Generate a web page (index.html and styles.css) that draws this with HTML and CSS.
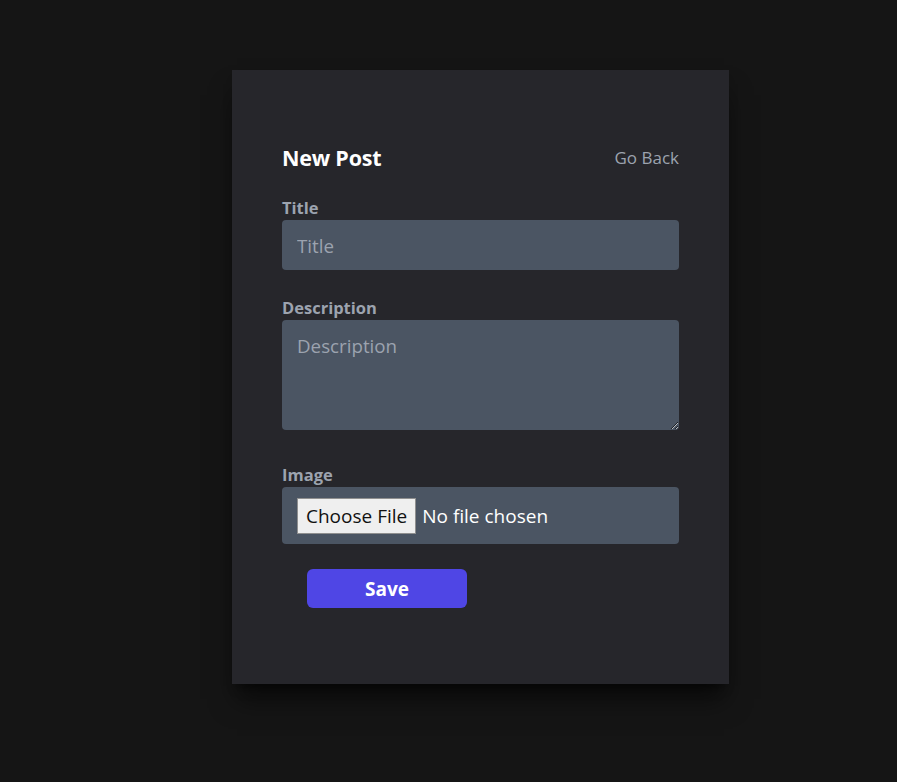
FILE: index.html
```html
<!DOCTYPE html>
<html>
<head>
<meta charset="utf-8">
<link rel="stylesheet" href="styles.css">
</head>
<body>
<div class="page">
  <form class="card">
    <div class="head">
      <h1 class="title">New Post</h1>
      <a class="back" href="#">Go Back</a>
    </div>
    <div class="field">
      <label class="label" for="t">Title</label>
      <input class="input" id="t" type="text" placeholder="Title">
    </div>
    <div class="field">
      <label class="label" for="d">Description</label>
      <textarea class="area" id="d" placeholder="Description"></textarea>
    </div>
    <div class="field">
      <label class="label" for="i">Image</label>
      <div class="filebox"><input class="file" id="i" type="file"></div>
    </div>
    <div class="actions">
      <button class="save" type="button">Save</button>
    </div>
  </form>
</div>
</body>
</html>
```

FILE: styles.css
```css
* { box-sizing: border-box; }
html, body { margin: 0; padding: 0; }
body {
  background: #151515;
  font-family: "Open Sans", "Noto Sans", sans-serif;
  height: 782px;
  overflow: hidden;
}
.page {
  padding: 70px 0 0 232px;
}
.card {
  width: 497px;
  height: 614px;
  background: #26262b;
  padding: 74px 50px 0 50px;
  box-shadow: 0 20px 25px -5px rgba(0,0,0,0.55), 0 8px 10px -6px rgba(0,0,0,0.55);
}
.head {
  display: flex;
  justify-content: space-between;
  align-items: center;
  height: 28px;
  margin-bottom: 24px;
}
.title {
  margin: 0;
  font-size: 21.5px;
  font-weight: 700;
  color: #ffffff;
  line-height: 28px;
  letter-spacing: -0.2px;
}
.back {
  color: #9ca3af;
  text-decoration: none;
  font-size: 17px;
  line-height: 28px;
}
.field {
  display: flex;
  flex-direction: column;
  margin-bottom: 26px;
}
.label {
  color: #9ca3af;
  font-weight: 700;
  font-size: 16.5px;
  line-height: 24px;
}
.input, .area {
  width: 100%;
  background: #4b5563;
  border: none;
  border-radius: 4px;
  color: #fff;
  font-family: inherit;
  font-size: 18.75px;
  padding: 0 15px;
  outline: none;
}
.input { height: 50px; }
.area {
  height: 110px;
  padding-top: 13px;
  resize: vertical;
  display: block;
}
.input::placeholder, .area::placeholder { color: #9ca3af; }
.field:nth-child(3) { margin-bottom: 33px; }
.filebox {
  background: #4b5563;
  border-radius: 4px;
  height: 57px;
  padding: 11px 15px;
  display: flex;
  align-items: center;
}
.file {
  color: #fff;
  font-family: inherit;
  font-size: 19px;
}
.file::file-selector-button {
  font-family: inherit;
  font-size: 19px;
  height: 36px;
  padding: 0 8px;
  margin-right: 6px;
  background: #efefef;
  color: #111;
  border: 1px solid #8f8f8f;
  border-radius: 0;
}
.field:nth-child(4) { margin-bottom: 25px; }
.actions {
  padding-left: 25px;
}
.save {
  width: 160px;
  height: 39px;
  background: #4f46e5;
  color: #fff;
  border: none;
  border-radius: 6px;
  font-family: inherit;
  font-weight: 700;
  font-size: 19px;
}
```
